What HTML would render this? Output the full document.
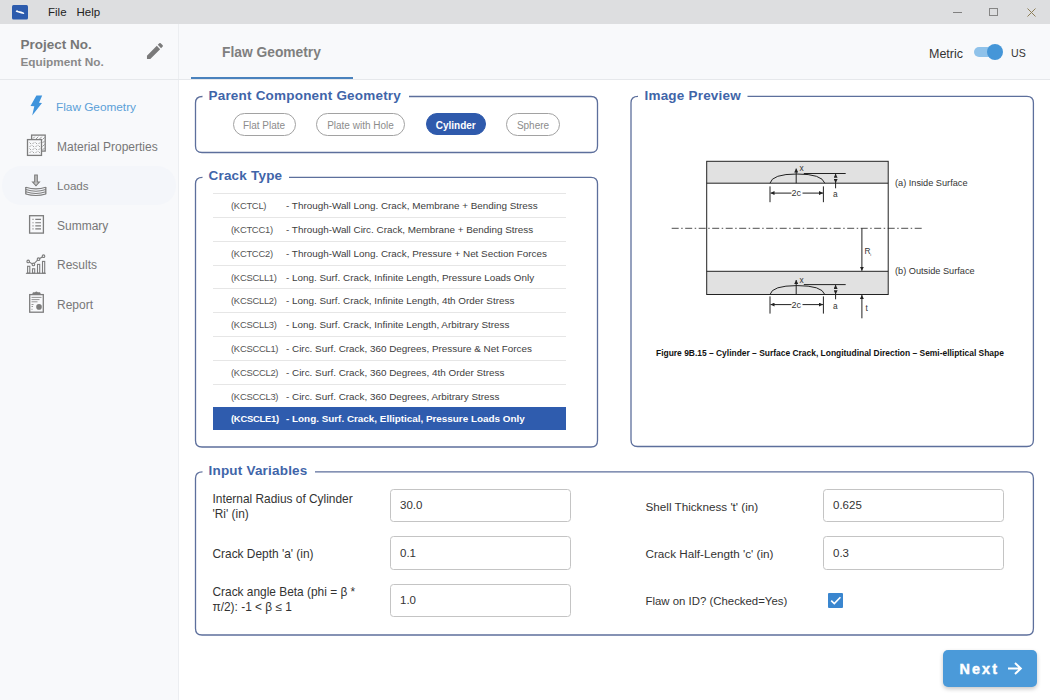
<!DOCTYPE html>
<html><head><meta charset="utf-8">
<style>
*{box-sizing:border-box;margin:0;padding:0}
html,body{width:1050px;height:700px;overflow:hidden;background:#fff;font-family:"Liberation Sans",sans-serif}
.abs{position:absolute}
svg{position:absolute;overflow:visible}
#titlebar{position:absolute;left:0;top:0;width:1050px;height:24px;background:#dddee0}
#sidebar{position:absolute;left:0;top:24px;width:179px;height:676px;background:#f8f9fb;border-right:1px solid #eceef1}
#header{position:absolute;left:179px;top:24px;width:871px;height:56px;background:#f8f9fb;border-bottom:1px solid #e6e8eb}
#sbhead{position:absolute;left:0;top:24px;width:179px;height:56px;border-bottom:1px solid #e6e8eb}
.t{position:absolute;white-space:nowrap;line-height:1}
.legend{position:absolute;color:#3f65a9;font-weight:bold;font-size:13.5px;letter-spacing:0.2px;line-height:1;white-space:nowrap}
.pill{position:absolute;height:23px;border:1px solid #a2a2a2;border-radius:12px;color:#8c8c8c;font-size:10px;line-height:23px;text-align:center;white-space:nowrap}
.pill.sel{background:#2f5aac;border-color:#2f5aac;color:#fff;font-weight:bold}
.row{position:absolute;left:213px;width:353px;height:24px;border-top:1px solid #e6e6e6;color:#4a4a4a;line-height:23px;white-space:nowrap}
.row .c{position:absolute;left:18px;font-size:9.4px;letter-spacing:-0.25px;top:0.1px;color:#555}
.row .d{position:absolute;left:73px;font-size:9.9px;color:#3d3d3d}
.row.sel{background:#2f5cae;font-weight:bold;border-top-color:#2f5cae}
.row.sel .c,.row.sel .d{color:#fff;margin-top:-1px}
.lbl{position:absolute;font-size:11.9px;color:#333;line-height:15.5px;white-space:nowrap}
.inp{position:absolute;width:181px;height:33px;border:1px solid #c4c4c4;border-radius:3.5px;font-size:11.5px;color:#333;padding-left:9px;line-height:31px}
.nav{position:absolute;left:57px;font-size:12px;color:#777;line-height:1;white-space:nowrap}
.fig{font-family:"Liberation Sans",sans-serif;fill:#333}
</style></head><body>
<div id="titlebar">
  <svg style="left:0;top:0" width="60" height="24">
    <rect x="12" y="5" width="16" height="14.5" rx="1.5" fill="#2c5bad"/>
    <path d="M15.6 11.2 L17.1 10.1 L18 11 L21.2 11.5 L23.6 12.6 Q24.8 13.5 24 13.9 L21.2 13.4 L18.2 12.4 L16.5 11.9 Z" fill="#fff"/>
  </svg>
  <div class="t" style="left:48px;top:7px;font-size:11.5px;color:#222">File</div>
  <div class="t" style="left:76.5px;top:7px;font-size:11.5px;color:#222">Help</div>
  <div class="abs" style="left:953px;top:12px;width:9px;height:1px;background:#808080"></div>
  <div class="abs" style="left:989px;top:8px;width:9px;height:8px;border:1px solid #858585"></div>
  <svg style="left:1027px;top:8px" width="9" height="9"><path d="M0.5 0.5 L8.5 8.5 M8.5 0.5 L0.5 8.5" stroke="#8d7e58" stroke-width="1"/></svg>
</div>
<div id="sidebar"></div>
<div id="sbhead"></div>
<div id="header"></div>
<div class="abs" style="left:180px;top:80px;width:870px;height:620px;background:#fff"></div>
<!-- hover pill for Loads -->
<div class="abs" style="left:2px;top:166px;width:174px;height:39px;border-radius:19px;background:#f4f6fa"></div>

<div class="t" style="left:20.5px;top:38px;font-size:13.5px;font-weight:bold;color:#777">Project No.</div>
<div class="t" style="left:20.5px;top:57px;font-size:11.8px;font-weight:bold;color:#8a8a8a">Equipment No.</div>
<svg style="left:0;top:0" width="180" height="80">
  <path transform="translate(144.3,40.3) scale(0.889)" d="M3 17.25V21h3.75L17.81 9.94l-3.75-3.75L3 17.25zM20.71 7.04c.39-.39.39-1.02 0-1.41l-2.34-2.34c-.39-.39-1.02-.39-1.41 0l-1.83 1.83 3.75 3.75 1.83-1.83z" fill="#7a7a7a"/>
</svg>

<div class="t" style="left:222px;top:45.5px;font-size:13.8px;font-weight:bold;color:#7f7f7f">Flaw Geometry</div>
<div class="abs" style="left:191px;top:77px;width:162px;height:2px;background:#4a82bd"></div>

<div class="t" style="left:929px;top:48px;font-size:12.5px;color:#333">Metric</div>
<div class="abs" style="left:974px;top:47px;width:28px;height:10px;border-radius:5px;background:#8fc2ea"></div>
<div class="abs" style="left:987px;top:44px;width:16px;height:16px;border-radius:8px;background:#4596d8"></div>
<div class="t" style="left:1011px;top:48px;font-size:10.6px;color:#333">US</div>

<!-- nav icons -->
<svg style="left:0;top:0" width="60" height="330">
  <path d="M36.4 95.5 L42.2 95.5 L39 102.8 L42 103.1 L32.2 115.4 L34.3 106.3 L30.5 106.1 Z" fill="#3f94dc"/>
  <g stroke="#7d7d7d" stroke-width="1.3" fill="none">
    <rect x="31.6" y="135.1" width="13.6" height="16"/>
    <rect x="27.5" y="139.6" width="14" height="15.8" fill="#f8f9fb"/>
  </g>
  <g stroke="#8c8c8c" stroke-width="0.9">
    <path d="M33 138.5 l1.8 -1.8 M35.5 139.5 l2.8 -2.8 M39 139.5 l2.8 -2.8 M42.5 139.5 l2.2 -2.2 M42.5 143 l2.2 -2.2 M42.5 146.5 l2.2 -2.2 M42.5 150 l2.2 -2.2"/>
  </g>
  <g stroke="#9a9a9a" stroke-width="0.9">
    <path d="M29.5 142.5 l1.6 1.6 M32.5 144 l1.6 -1.6 M35.5 142.5 l1.6 1.6 M38.5 144 l1.6 -1.6 M29.5 147 l1.6 -1.6 M32.5 145.5 l1.6 1.6 M35.5 147 l1.6 -1.6 M38.5 145.5 l1.6 1.6 M29.5 148.5 l1.6 1.6 M32.5 150 l1.6 -1.6 M35.5 148.5 l1.6 1.6 M38.5 150 l1.6 -1.6 M29.5 153 l1.6 -1.6 M32.5 151.5 l1.6 1.6 M35.5 153 l1.6 -1.6 M38.5 151.5 l1.6 1.6"/>
  </g>
  <g stroke="#7d7d7d" stroke-width="1.2" fill="none">
    <path d="M34.7 175 V182 H32.6 L36 185.8 L39.4 182 H37.3 V175 Z" fill="#c4c4c4" stroke-width="1.1"/>
    <path d="M25.8 187.2 Q36 190.6 45.8 187.2 M25.8 189.5 Q36 192.9 45.8 189.5 M25.8 191.8 Q36 195.2 45.8 191.8 M25.8 194 Q36 197 45.8 194" stroke-width="1.05"/>
    <path d="M25.8 187 V194.2 M45.8 187 V194.2" stroke-width="1.3"/>
  </g>
  <g stroke="#7d7d7d" stroke-width="1.3" fill="none">
    <rect x="29.6" y="215.7" width="13.8" height="17.4"/>
  </g>
  <g stroke="#7d7d7d" stroke-width="1.1">
    <path d="M32.5 219.4 h1 M32.5 222.7 h1 M32.5 225.9 h1 M32.5 228.9 h1 M35.3 219.4 H41 M35.3 222.7 H41 M35.3 225.9 H41 M35.3 228.9 H41"/>
  </g>
  <g stroke="#7d7d7d" stroke-width="1.1" fill="none">
    <path d="M25.9 273.3 H45.8"/>
    <rect x="27.6" y="266.3" width="2.2" height="6.8"/>
    <rect x="32.5" y="268.8" width="2.2" height="4.3"/>
    <rect x="37.5" y="264.4" width="2.2" height="8.7"/>
    <rect x="42.5" y="261.4" width="2.2" height="11.7"/>
    <path d="M28.2 261.4 L33.4 264.4 L38.5 259.2 L43.5 256.2"/>
    <circle cx="28.2" cy="261.4" r="1.3" fill="#f8f9fb"/>
    <circle cx="33.4" cy="264.4" r="1.3" fill="#f8f9fb"/>
    <circle cx="38.5" cy="259.2" r="1.3" fill="#f8f9fb"/>
    <circle cx="43.5" cy="256.2" r="1.3" fill="#f8f9fb"/>
  </g>
  <g stroke="#7d7d7d" stroke-width="1.3" fill="none">
    <rect x="29.7" y="294.6" width="13.6" height="17.6"/>
  </g>
  <path d="M32 294.5 L33 292.3 H35 Q36.4 290.6 37.8 292.3 H40 L41 294.5 Z" fill="#7d7d7d"/>
  <g stroke="#8a8a8a" stroke-width="0.9">
    <path d="M31.5 297.4 H41.5 M31.5 299.6 H39.5 M31.5 301.8 H37.5 M31.5 304.5 H33.5 M31.5 306.5 H33 M31.5 309.3 H32.5"/>
  </g>
  <circle cx="39" cy="306.9" r="2.8" fill="#7d7d7d"/>
</svg>

<div class="nav" style="top:102px;left:56px;font-size:11.8px;color:#5aa0d8">Flaw Geometry</div>
<div class="nav" style="top:141px">Material Properties</div>
<div class="nav" style="top:180px;font-size:11.6px">Loads</div>
<div class="nav" style="top:220px">Summary</div>
<div class="nav" style="top:259px">Results</div>
<div class="nav" style="top:299px">Report</div>

<!-- fieldset borders -->
<svg style="left:0;top:0" width="1050" height="700">
  <g fill="none" stroke="#5d6f9c" stroke-width="1.3">
    <path d="M202.5 96.5 Q195.5 96.5 195.5 103.0 V146.0 Q195.5 152.5 202.0 152.5 H591.0 Q597.5 152.5 597.5 146.0 V103.0 Q597.5 96.5 591.0 96.5 H409"/>
    <path d="M202.5 177.3 Q195.5 177.3 195.5 183.8 V440.5 Q195.5 447.0 202.0 447.0 H591.0 Q597.5 447.0 597.5 440.5 V183.8 Q597.5 177.3 591.0 177.3 H289"/>
    <path d="M638.0 96.3 Q631.0 96.3 631.0 102.8 V440.0 Q631.0 446.5 637.5 446.5 H1026.9 Q1033.4 446.5 1033.4 440.0 V102.8 Q1033.4 96.3 1026.9 96.3 H747.5"/>
    <path d="M202.5 471.8 Q195.5 471.8 195.5 478.3 V628.5 Q195.5 635.0 202.0 635.0 H1026.9 Q1033.4 635.0 1033.4 628.5 V478.3 Q1033.4 471.8 1026.9 471.8 H315"/>
  </g>
</svg>

<!-- Parent Component Geometry -->
<div class="legend" style="left:208.5px;top:88.5px">Parent Component Geometry</div>
<div class="pill" style="left:232.5px;top:112.5px;width:63px">Flat Plate</div>
<div class="pill" style="left:316px;top:112.5px;width:89px">Plate with Hole</div>
<div class="pill sel" style="left:425.5px;top:113px;width:60.5px;height:22px;line-height:23px">Cylinder</div>
<div class="pill" style="left:506px;top:112.5px;width:54px">Sphere</div>

<!-- Crack Type -->
<div class="legend" style="left:208.5px;top:169px">Crack Type</div>
<div class="row" style="top:193.3px"><span class="c">(KCTCL)</span><span class="d">- Through-Wall Long. Crack, Membrane + Bending Stress</span></div>
<div class="row" style="top:217.1px"><span class="c">(KCTCC1)</span><span class="d">- Through-Wall Circ. Crack, Membrane + Bending Stress</span></div>
<div class="row" style="top:240.8px"><span class="c">(KCTCC2)</span><span class="d">- Through-Wall Long. Crack, Pressure + Net Section Forces</span></div>
<div class="row" style="top:264.6px"><span class="c">(KCSCLL1)</span><span class="d">- Long. Surf. Crack, Infinite Length, Pressure Loads Only</span></div>
<div class="row" style="top:288.4px"><span class="c">(KCSCLL2)</span><span class="d">- Long. Surf. Crack, Infinite Length, 4th Order Stress</span></div>
<div class="row" style="top:312.1px"><span class="c">(KCSCLL3)</span><span class="d">- Long. Surf. Crack, Infinite Length, Arbitrary Stress</span></div>
<div class="row" style="top:335.9px"><span class="c">(KCSCCL1)</span><span class="d">- Circ. Surf. Crack, 360 Degrees, Pressure &amp; Net Forces</span></div>
<div class="row" style="top:359.7px"><span class="c">(KCSCCL2)</span><span class="d">- Circ. Surf. Crack, 360 Degrees, 4th Order Stress</span></div>
<div class="row" style="top:383.5px"><span class="c">(KCSCCL3)</span><span class="d">- Circ. Surf. Crack, 360 Degrees, Arbitrary Stress</span></div>
<div class="row sel" style="top:407.2px;height:22.8px"><span class="c">(KCSCLE1)</span><span class="d">- Long. Surf. Crack, Elliptical, Pressure Loads Only</span></div>

<!-- Image Preview -->
<div class="legend" style="left:644.5px;top:88.5px">Image Preview</div>
<svg style="left:0;top:0" width="1050" height="700">
  <defs>
    <marker id="ah" viewBox="0 0 6 6" refX="6" refY="3" markerWidth="4" markerHeight="4" orient="auto"><path d="M0 0 L6 3 L0 6 Z" fill="#222"/></marker>
  </defs>
  <rect x="706.7" y="161.3" width="181.5" height="21.9" fill="#e1e1e1"/>
  <rect x="706.7" y="271.3" width="181.5" height="23.2" fill="#e1e1e1"/>
  <g stroke="#222" stroke-width="1" fill="none">
    <rect x="706.7" y="161.3" width="181.5" height="133.2"/>
    <path d="M706.7 183.2 H888.2 M706.7 271.3 H888.2"/>
    <path d="M671.7 228.3 H921.7" stroke-dasharray="7 2.5 1.5 2.5" stroke-width="0.8"/>
    <!-- top crack -->
    <path d="M770 183.2 Q772 174 797 174 Q822 174 824.8 183.2"/>
    <path d="M796.2 183.2 V168.5" marker-end="url(#ah)"/>
    <path d="M803.8 173.5 H845.7"/>
    <path d="M835.6 176.5 V173.8" marker-end="url(#ah)"/>
    <path d="M835.6 180 V183" marker-end="url(#ah)"/>
    <path d="M835.6 183 V188.3"/>
    <path d="M770 186.4 V202.2 M823.4 186.4 V202.2"/>
    <path d="M791.5 193.1 H770.5" marker-end="url(#ah)"/>
    <path d="M802.5 193.1 H823" marker-end="url(#ah)"/>
    <!-- Ri -->
    <path d="M861.9 228.3 V270.8" marker-end="url(#ah)"/>
    <!-- bottom crack -->
    <path d="M770 294.5 Q772 285.6 797 285.6 Q822 285.6 824.8 294.5"/>
    <path d="M796.2 294.5 V280" marker-end="url(#ah)"/>
    <path d="M803.8 284.6 H845.7"/>
    <path d="M835.6 287.5 V284.9" marker-end="url(#ah)"/>
    <path d="M835.6 291 V294.3" marker-end="url(#ah)"/>
    <path d="M835.6 294.5 V299.3"/>
    <path d="M770 296.4 V313.6 M823.4 296.4 V313.6"/>
    <path d="M791.5 304.6 H770.5" marker-end="url(#ah)"/>
    <path d="M802.5 304.6 H823" marker-end="url(#ah)"/>
    <path d="M861.9 318.3 V295" marker-end="url(#ah)"/>
  </g>
  <g class="fig" font-size="8.3">
    <text x="799.5" y="171">x</text>
    <text x="791.5" y="196.2" font-size="9">2c</text>
    <text x="833" y="197">a</text>
    <text x="864.5" y="254">R</text><text x="870.3" y="255.5" font-size="4">i</text>
    <text x="799.5" y="282.5">x</text>
    <text x="791.5" y="307.7" font-size="9">2c</text>
    <text x="833" y="308.5">a</text>
    <text x="865.5" y="311">t</text>
    <text x="895" y="186.3" font-size="9.2">(a) Inside Surface</text>
    <text x="895" y="273.7" font-size="9.2">(b) Outside Surface</text>
    <text x="656" y="356.4" font-size="8.45" font-weight="bold" fill="#111">Figure 9B.15 – Cylinder – Surface Crack, Longitudinal Direction – Semi-elliptical Shape</text>
  </g>
</svg>

<!-- Input Variables -->
<div class="legend" style="left:208.5px;top:464px">Input Variables</div>
<div class="lbl" style="left:212.5px;top:491.5px;line-height:15px">Internal Radius of Cylinder<br>'Ri' (in)</div>
<div class="inp" style="left:390px;top:489px">30.0</div>
<div class="lbl" style="left:212.5px;top:546.5px">Crack Depth 'a' (in)</div>
<div class="lbl" style="left:212.5px;top:584.5px;line-height:15.5px">Crack angle Beta (phi = β *<br>π/2): -1 &lt; β ≤ 1</div>
<div class="inp" style="left:390px;top:536px;height:34px;line-height:32px">0.1</div>
<div class="inp" style="left:390px;top:584px">1.0</div>
<div class="lbl" style="left:645.5px;top:498.5px;font-size:11.7px">Shell Thickness 't' (in)</div>
<div class="inp" style="left:823px;top:489px">0.625</div>
<div class="lbl" style="left:645.5px;top:545.5px;font-size:11.7px">Crack Half-Length 'c' (in)</div>
<div class="inp" style="left:823px;top:536px;height:34px;line-height:32px">0.3</div>
<div class="lbl" style="left:645.5px;top:594px;font-size:11.4px">Flaw on ID? (Checked=Yes)</div>
<svg style="left:828px;top:593px" width="15" height="15">
  <rect x="0" y="0" width="15" height="15" rx="1" fill="#3a86cf"/>
  <path d="M3.2 7.6 L6.3 10.6 L12.4 4.2" stroke="#fff" stroke-width="1.6" fill="none"/>
</svg>

<div class="abs" style="left:942.5px;top:649.5px;width:94.5px;height:37px;background:#4b9ad9;border-radius:5px;box-shadow:0 2px 4px rgba(0,0,0,.22)"></div>
<div class="t" style="left:959.5px;top:661.5px;font-size:14.4px;font-weight:bold;letter-spacing:2.1px;color:#fff;-webkit-text-stroke:0.45px #fff">Next</div>
<svg style="left:1007px;top:661px" width="16" height="16">
  <path d="M1 7.5 H13.5 M8 2 L13.8 7.5 L8 13" stroke="#fff" stroke-width="2" fill="none"/>
</svg>
</body></html>
